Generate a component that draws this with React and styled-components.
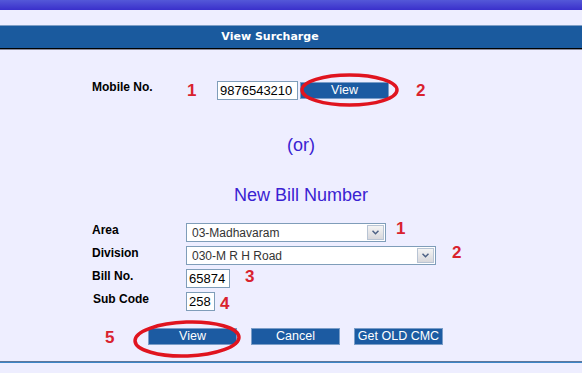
import React from "react";
import styled, { createGlobalStyle } from "styled-components";

const Global = createGlobalStyle`
  html, body { margin: 0; padding: 0; }
  body {
    background: #eeeeff;
    font-family: "Liberation Sans", Arial, sans-serif;
    width: 582px;
    height: 373px;
    overflow: hidden;
  }
`;

const Page = styled.div`
  width: 582px;
  display: flex;
  flex-direction: column;
`;

const TopBar = styled.div`
  height: 10px;
  background: linear-gradient(#5458d8, #3a30cb);
`;

const Header = styled.div`
  margin-top: 15px;
  height: 22px;
  border-top: 1px solid #7f9fc6;
  border-bottom: 1px solid #000;
  box-shadow: 0 1px 0 #8a8a9a;
  background: #1a5a9e;
  color: #fff;
  font-family: "DejaVu Sans", Verdana, sans-serif;
  font-weight: bold;
  font-size: 11px;
  line-height: 22px;
  text-align: center;
  padding-right: 42px;
`;

const Content = styled.div`
  display: flex;
  flex-direction: column;
`;

const MobileRow = styled.div`
  margin-top: 32px;
  padding-left: 92px;
  display: flex;
  align-items: center;
  height: 18px;
`;

const Label = styled.div`
  width: ${(p) => p.$w || 94}px;
  font-weight: bold;
  font-size: 12px;
  line-height: 14px;
  color: #000;
  align-self: flex-start;
  padding-left: ${(p) => p.$pl || 0}px;
  margin-top: ${(p) => p.$mt || 0}px;
  box-sizing: border-box;
`;

const Num = styled.span`
  color: #d9222e;
  font-weight: bold;
  font-size: 17px;
  line-height: 17px;
  width: ${(p) => (p.$w ? `${p.$w}px` : "auto")};
  margin-left: ${(p) => p.$ml || 0}px;
  margin-top: ${(p) => p.$mt || 0}px;
`;

const TextInput = styled.input`
  box-sizing: border-box;
  width: ${(p) => p.$w}px;
  height: 19px;
  margin: 0;
  padding: 0 2px;
  border: 1px solid #7f9db9;
  background: #fff;
  font-family: "Liberation Sans", Arial, sans-serif;
  font-size: 13px;
  color: #000;
  outline: none;
`;

const Circled = styled.div`
  position: relative;
  display: flex;
  margin-left: ${(p) => p.$ml || 0}px;
`;

const Ring = styled.svg`
  position: absolute;
  left: ${(p) => p.$l}px;
  top: ${(p) => p.$t}px;
  pointer-events: none;
  overflow: visible;
`;

const Button = styled.button`
  box-sizing: border-box;
  width: 89px;
  height: 17px;
  margin: 0;
  padding: 0;
  border: 1px solid #7a9dc8;
  background: #1c5ba2;
  color: #fff;
  font-family: "Liberation Sans", Arial, sans-serif;
  font-size: 12.5px;
  line-height: 15px;
  cursor: pointer;
`;

const Or = styled.div`
  margin-top: 35px;
  font-size: 18px;
  line-height: 22px;
  color: #3a22d2;
  text-align: center;
  padding-left: 20px;
`;

const Title = styled(Or)`
  margin-top: 28px;
`;

const BillGrid = styled.div`
  margin-top: 17px;
  padding-left: 92px;
  display: grid;
  grid-template-columns: 94px auto;
  grid-auto-rows: 19px;
  row-gap: 4px;
`;

const Cell = styled.div`
  display: flex;
  align-items: flex-start;
`;

const SelectBox = styled.div`
  box-sizing: border-box;
  width: ${(p) => p.$w}px;
  height: 19px;
  border: 1px solid #7f9db9;
  background: #fff;
  display: flex;
  align-items: center;
  padding: 1px;
`;

const NativeSelect = styled.select`
  flex: 1;
  min-width: 0;
  height: 100%;
  appearance: none;
  border: none;
  background: transparent;
  padding: 0 0 0 4px;
  margin: 0;
  font-family: "Liberation Sans", Arial, sans-serif;
  font-size: 12px;
  color: #333;
  outline: none;
`;

const Arrow = styled.div`
  box-sizing: border-box;
  width: 17px;
  height: 15px;
  border: 1px solid #b8c4d4;
  background: linear-gradient(#f4f4f4, #d8d8dc);
  display: flex;
  align-items: center;
  justify-content: center;
`;

const ButtonRow = styled.div`
  margin-top: 17px;
  padding-left: 105px;
  display: flex;
  align-items: center;
  height: 17px;
`;

const Buttons = styled.div`
  display: flex;
  gap: 14px;
`;

const BottomRule = styled.div`
  margin-top: 16px;
  height: 1px;
  background: #60789a;
  border-bottom: 1px solid #3c86c8;
`;

function Chevron() {
  return (
    <svg width="7" height="5" viewBox="0 0 7 5">
      <path d="M0.5 0.8 L3.5 3.8 L6.5 0.8" fill="none" stroke="#4d6185" strokeWidth="1.5" />
    </svg>
  );
}

function Select({ w, value }) {
  return (
    <SelectBox $w={w}>
      <NativeSelect defaultValue={value}>
        <option>{value}</option>
      </NativeSelect>
      <Arrow>
        <Chevron />
      </Arrow>
    </SelectBox>
  );
}

function Ellipse({ l, t, w, h, rot = 0 }) {
  return (
    <Ring $l={l} $t={t} width={w} height={h} viewBox={`0 0 ${w} ${h}`}>
      <ellipse
        cx={w / 2}
        cy={h / 2}
        rx={w / 2 - 2}
        ry={h / 2 - 2}
        fill="none"
        stroke="#e0141f"
        strokeWidth="3.5"
        transform={`rotate(${rot} ${w / 2} ${h / 2})`}
      />
    </Ring>
  );
}

export default function App() {
  return (
    <>
      <Global />
      <Page>
        <TopBar />
        <Header>View Surcharge</Header>
        <Content>
          <MobileRow>
            <Label $w={95} $mt={-1}>Mobile No.</Label>
            <Num $w={30} $mt={1}>1</Num>
            <TextInput $w={81} defaultValue="9876543210" />
            <Circled $ml={2}>
              <Button>View</Button>
              <Ellipse l={0} t={-9} w={99} h={34} />
            </Circled>
            <Num $ml={27} $mt={1}>2</Num>
          </MobileRow>

          <Or>(or)</Or>
          <Title>New Bill Number</Title>

          <BillGrid>
            <Label>Area</Label>
            <Cell>
              <Select w={200} value="03-Madhavaram" />
              <Num $ml={10} $mt={-3}>1</Num>
            </Cell>

            <Label>Division</Label>
            <Cell>
              <Select w={250} value="030-M R H Road" />
              <Num $ml={16} $mt={-2}>2</Num>
            </Cell>

            <Label>Bill No.</Label>
            <Cell>
              <TextInput $w={44} defaultValue="65874" />
              <Num $ml={15} $mt={-1}>3</Num>
            </Cell>

            <Label $pl={1}>Sub Code</Label>
            <Cell>
              <TextInput $w={29} defaultValue="258" />
              <Num $ml={5} $mt={3}>4</Num>
            </Cell>
          </BillGrid>

          <ButtonRow>
            <Num $w={43} $mt={1}>5</Num>
            <Buttons>
              <Circled>
                <Button>View</Button>
                <Ellipse l={-15} t={-8} w={108} h={38} rot={-2} />
              </Circled>
              <Button>Cancel</Button>
              <Button>Get OLD CMC</Button>
            </Buttons>
          </ButtonRow>
        </Content>
        <BottomRule />
      </Page>
    </>
  );
}
